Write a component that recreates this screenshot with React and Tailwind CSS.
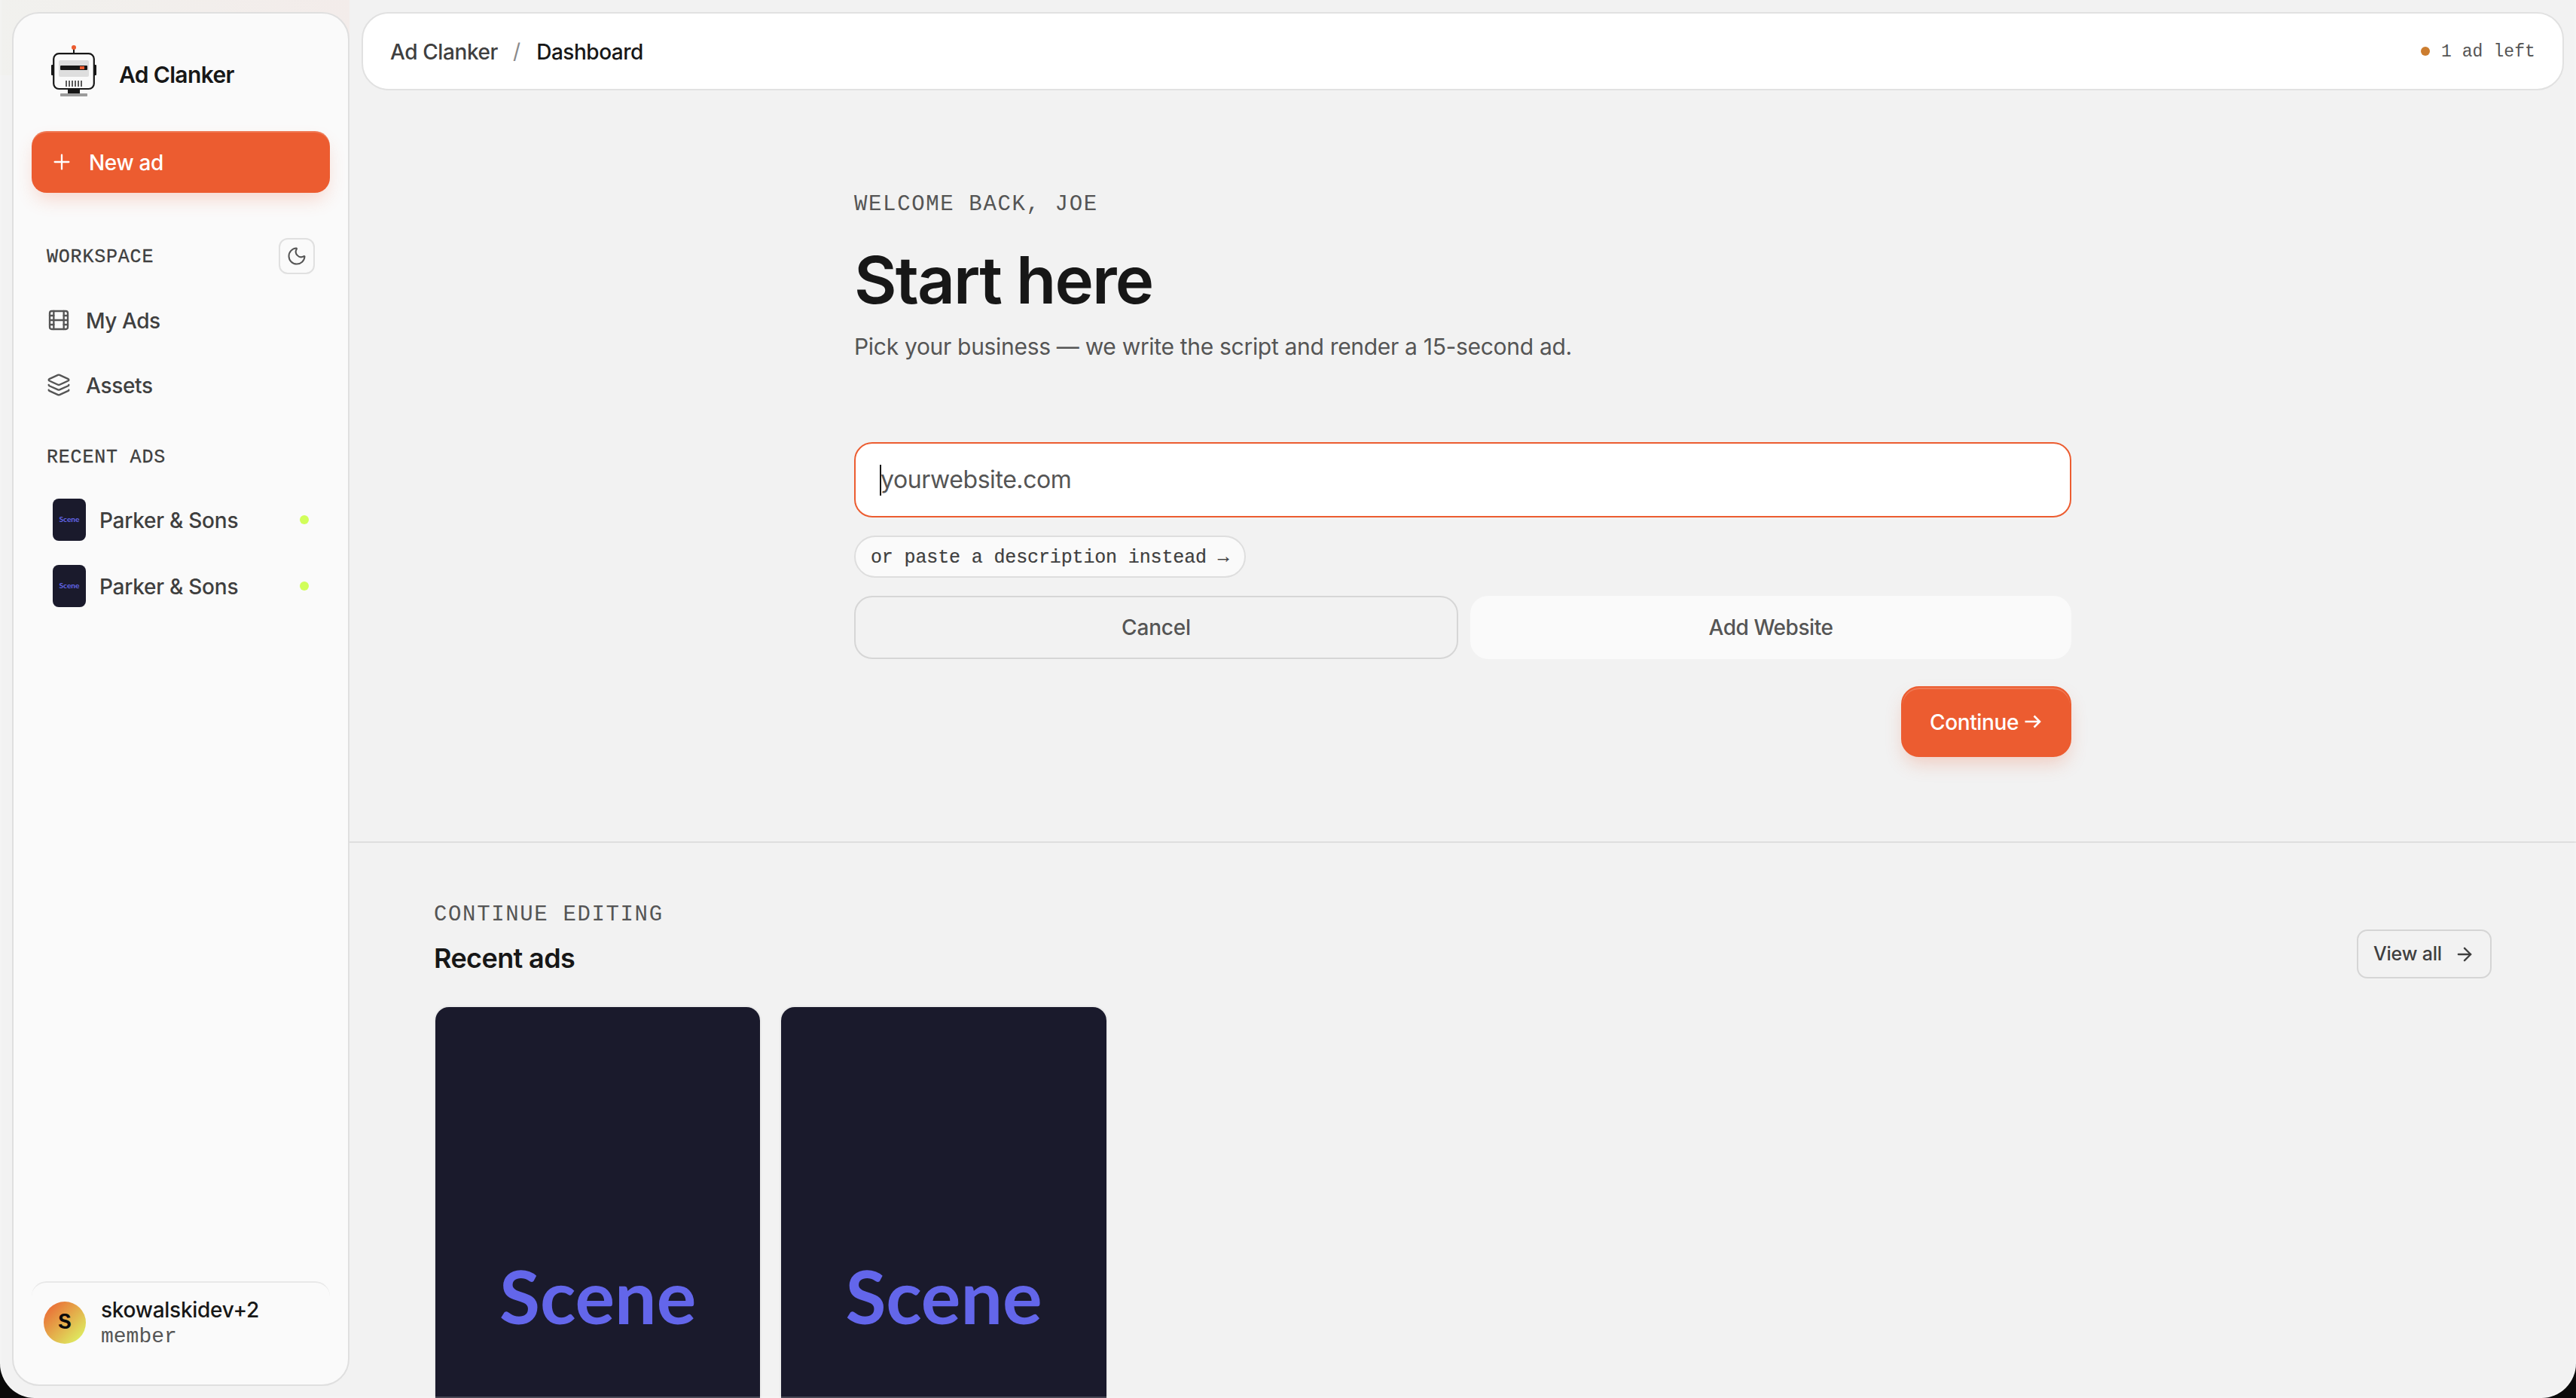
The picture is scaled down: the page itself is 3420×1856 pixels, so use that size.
import { Film, Layers, Moon, Plus, ArrowRight } from "lucide-react";

const navItems = [
    { label: "My Ads", icon: Film, tracking: "tracking-[-0.45px]" },
    { label: "Assets", icon: Layers, tracking: "tracking-[-0.33px]" },
];

const recentAds = [
    { id: 1, name: "Parker & Sons" },
    { id: 2, name: "Parker & Sons" },
];

const Logo = () => (
    <svg viewBox="62 58 72 72" className="w-[72px] h-[72px] shrink-0" fill="none">
        {/* antenna */}
        <path d="M98 64v7" stroke="#171717" strokeWidth="2" />
        <circle cx="98" cy="63" r="3" fill="#ec5c30" />
        {/* ears */}
        <rect x="68" y="86" width="5" height="14" rx="1" fill="#171717" />
        <rect x="123" y="86" width="5" height="14" rx="1" fill="#171717" />
        {/* head */}
        <rect x="71.2" y="71.2" width="53.6" height="46.8" rx="7" fill="#fafafa" stroke="#171717" strokeWidth="2.2" />
        <rect x="78" y="80" width="40" height="22" rx="2" fill="#dedede" />
        <rect x="80" y="87" width="36" height="6" rx="1" fill="#171717" />
        <rect x="106" y="88" width="6" height="4" fill="#ec5c30" />
        <path d="M88 107v8M92 107v8M96 107v8M100 107v8M104 107v8M108 107v8" stroke="#4a4a4a" strokeWidth="1.8" />
        {/* stand */}
        <rect x="90" y="118.5" width="16" height="5.5" fill="#171717" />
        <rect x="80" y="124" width="36" height="4" rx="0.8" fill="#9c9c9c" />
    </svg>
);

const Sidebar = () => {
    return (
        <div className="w-[464px] shrink-0 h-full pl-4 py-4 bg-[linear-gradient(to_right,#f1f1ee,#f3ecea)] bg-[length:100%_100px] bg-no-repeat">
            <aside className="w-full h-full flex flex-col px-6 border-2 border-[#dfdfdf] rounded-[36px] bg-[#fafafa]">
                <div className="mt-10 pl-5 flex items-center gap-6">
                    <Logo />
                    <span className="pt-2.5 text-[30px] leading-10 font-semibold tracking-[-0.65px] text-[#171717]">
                        Ad Clanker
                    </span>
                </div>

                <button className="mt-11 h-[82px] pl-6 shrink-0 flex items-center gap-5 rounded-[20px] bg-[#ec5c30] text-white shadow-[inset_0_2px_0_rgba(255,255,255,0.18),0_12px_24px_-4px_rgba(236,92,48,0.22)]">
                    <Plus size={32} strokeWidth={1.75} />
                    <span className="pt-px text-[28px] font-medium tracking-[-0.35px]">New ad</span>
                </button>

                <div className="mt-[60px] h-12 px-5 flex items-center justify-between">
                    <span className="pt-1 font-['Liberation_Mono',monospace] text-[25px] leading-8 tracking-[0.8px] text-[#3f3f3f] [-webkit-text-stroke:0.3px_#3f3f3f]">
                        WORKSPACE
                    </span>
                    <button className="w-12 h-12 flex items-center justify-center rounded-xl border-2 border-[#e0e0e0] text-[#555]">
                        <Moon size={28} strokeWidth={1.75} />
                    </button>
                </div>

                <nav className="mt-[23px] flex flex-col gap-2.5">
                    {navItems.map(({ label, icon: Icon, tracking }) => (
                        <a key={label} className="h-[76px] pl-5 flex items-center gap-5 text-[#3f3f3f]">
                            <Icon size={32} strokeWidth={1.75} className="text-[#555]" />
                            <span className={`pt-px text-[28px] font-medium ${tracking}`}>{label}</span>
                        </a>
                    ))}
                </nav>

                <div className="mt-[38px] pt-px pl-5 font-['Liberation_Mono',monospace] text-[25px] leading-[39px] tracking-[0.8px] text-[#3f3f3f] [-webkit-text-stroke:0.3px_#3f3f3f]">
                    RECENT ADS
                </div>

                <div className="mt-[25px] flex flex-col gap-3">
                    {recentAds.map((ad) => (
                        <a key={ad.id} className="h-[76px] px-7 flex items-center">
                            <span className="w-11 h-14 flex items-center justify-center rounded-lg bg-[#1a1a2c] font-['Lato',sans-serif] font-bold text-[10.2px] text-[#6366ea]">
                                Scene
                            </span>
                            <span className="ml-[18px] pt-px text-[28px] font-medium tracking-[-0.25px] text-[#3f3f3f]">{ad.name}</span>
                            <span className="ml-auto w-3 h-3 rounded-full bg-[#d1fe5a]"></span>
                        </a>
                    ))}
                </div>

                <div className="mt-auto h-[137px] pt-[18px] pl-4 flex items-start gap-5 border-t-2 border-[#e8e8e8] rounded-t-[20px]">
                    <div className="mt-[7px] pt-0.5 w-14 h-14 flex items-center justify-center rounded-full bg-[linear-gradient(135deg,#ec5c30,#dcff66)] font-['Liberation_Mono',monospace] font-bold text-[29px] text-[#0c0c0c]">
                        S
                    </div>
                    <div>
                        <div className="text-[28px] leading-9 font-medium tracking-[-0.27px] text-[#171717]">skowalskidev+2</div>
                        <div className="font-['Liberation_Mono',monospace] text-[28px] leading-[35px] text-[#555]">member</div>
                    </div>
                </div>
            </aside>
        </div>
    );
};

const Header = () => {
    return (
        <header className="mx-4 mt-4 h-[104px] px-9 shrink-0 flex items-center rounded-[36px] border-2 border-[#e1e1e1] bg-white text-[28px] font-medium">
            <span className="pt-px tracking-[-0.4px] text-[#3f3f3f]">Ad Clanker</span>
            <span className="ml-5 font-normal text-[#8a8a8a]">/</span>
            <span className="ml-[21px] pt-px tracking-[-0.47px] text-[#171717]">Dashboard</span>
            <span className="ml-auto w-3 h-3 rounded-full bg-[#cc7d2f]"></span>
            <span className="ml-[15px] pt-0.5 font-['Liberation_Mono',monospace] font-normal text-[23px] leading-8 tracking-[0.1px] text-[#555]">
                1 ad left
            </span>
        </header>
    );
};

const StartHere = () => {
    return (
        <section className="w-[1616px] mx-auto mt-[132px] shrink-0 flex flex-col">
            <p className="font-['Liberation_Mono',monospace] text-[29px] leading-10 tracking-[1.64px] text-[#555]">
                WELCOME BACK, JOE
            </p>
            <h1 className="mt-8 text-[87px] leading-[96px] font-semibold tracking-[-1.9px] text-[#171717]">Start here</h1>
            <p className="mt-5 text-[30px] leading-10 tracking-[-0.31px] text-[#555]">
                Pick your business — we write the script and render a 15-second ad.
            </p>

            {/* Website field */}
            <div className="mt-[107px] h-[100px] pl-8 flex items-center rounded-3xl border-2 border-[#ec5c30] bg-white">
                <span className="w-0.5 h-[41px] bg-[#171717]"></span>
                <span className="-ml-px text-[32px] tracking-[-0.43px] text-[#555]">yourwebsite.com</span>
            </div>

            <button className="mt-6 w-[520px] h-14 pl-5 pt-1 flex items-center rounded-full border-2 border-[#dedede] bg-[#fafafa] font-['Liberation_Mono',monospace] text-[25px] tracking-[-0.14px] whitespace-pre text-[#3f3f3f] [-webkit-text-stroke:0.2px_#3f3f3f]">
                or paste a description instead →
            </button>

            <div className="mt-6 flex gap-4 text-[28px] font-medium text-[#555]">
                <button className="w-[802px] h-[84px] rounded-3xl border-2 border-[#d6d6d6] tracking-[-0.18px]">Cancel</button>
                <button className="flex-1 h-[84px] rounded-3xl bg-[#fafafa] tracking-[-0.45px]">Add Website</button>
            </div>

            <button className="mt-9 self-end w-[226px] h-[94px] pl-9 flex items-center gap-2 rounded-3xl border-2 border-[#ec5c30] bg-[#ec5c30] text-white shadow-[inset_0_2px_0_rgba(255,255,255,0.18),0_12px_24px_-4px_rgba(236,92,48,0.25)]">
                <span className="pt-px text-[28px] font-medium tracking-[-0.37px]">Continue</span>
                <svg viewBox="0 0 22 18" className="w-[22px] h-[18px]" fill="none" stroke="currentColor" strokeWidth="2.6">
                    <path d="M0.5 9h19.5M12.5 1.5L20 9l-7.5 7.5" />
                </svg>
            </button>
        </section>
    );
};

const RecentAds = () => {
    return (
        <section className="mt-28 px-28 border-t-2 border-[#dedede]">
            <div className="mt-[75px] h-[105px] flex justify-between items-end">
                <div className="pb-[5px]">
                    <p className="font-['Liberation_Mono',monospace] text-[29px] leading-10 tracking-[1.64px] text-[#555]">
                        CONTINUE EDITING
                    </p>
                    <h2 className="mt-[15px] text-[36px] leading-[44px] font-semibold tracking-[-0.61px] text-[#171717]">Recent ads</h2>
                </div>
                <button className="w-[179px] h-[65px] pl-5 flex items-center rounded-[14px] border-2 border-[#d5d5d5] text-[#3f3f3f]">
                    <span className="pt-px text-[25px] font-medium tracking-[-0.2px]">View all</span>
                    <ArrowRight size={28} strokeWidth={2} className="ml-4" />
                </button>
            </div>

            <div className="mt-9 grid grid-cols-6 gap-6">
                {recentAds.map((ad) => (
                    <div key={ad.id} className="border-2 border-[#ebebeb] rounded-[20px]">
                        <div className="aspect-[9/16] flex items-center justify-center rounded-t-[18px] bg-[#1a1a2c] font-['Lato',sans-serif] font-bold text-[98.5px] text-[#6366ea]">
                            Scene
                        </div>
                    </div>
                ))}
            </div>
        </section>
    );
};

const App = () => {
    return (
        <div className="w-[3420px] h-[1856px] overflow-hidden bg-[#0a0a0a] font-['Inter',sans-serif] antialiased">
            <div className="relative w-full h-full flex overflow-hidden rounded-b-[46px] bg-[#f2f2f2]">
                <Sidebar />
                <main className="flex-1 min-w-0 h-full flex flex-col">
                    <Header />
                    <StartHere />
                    <RecentAds />
                </main>
                {/* window edge highlight */}
                <div className="absolute inset-0 pointer-events-none rounded-b-[46px] border-2 border-t-0 border-white/20"></div>
            </div>
        </div>
    );
};

export default App;
